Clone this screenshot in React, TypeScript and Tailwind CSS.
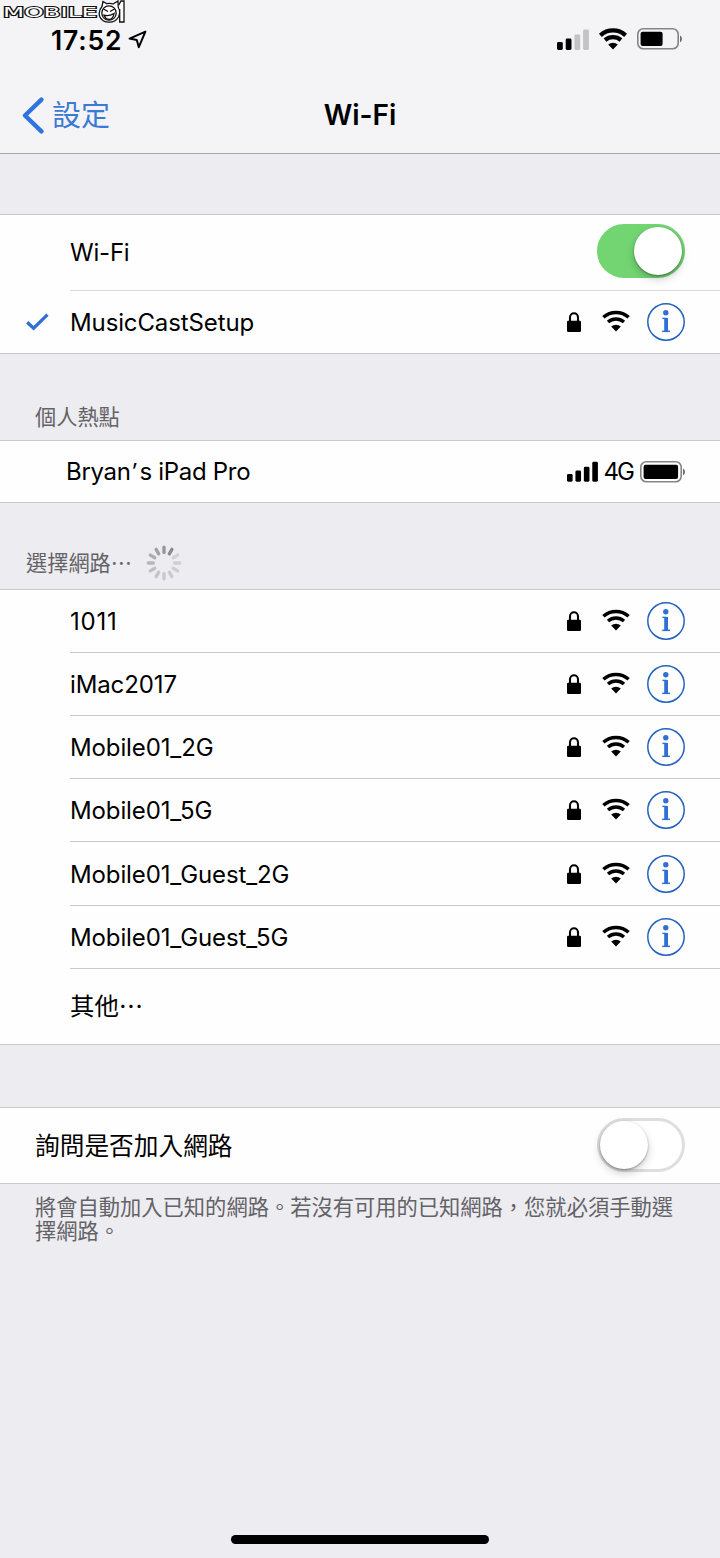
import { useState } from "react";
import type { ReactNode } from "react";
import clsx from "clsx";

const NETWORKS = ["1011", "iMac2017", "Mobile01_2G", "Mobile01_5G", "Mobile01_Guest_2G", "Mobile01_Guest_5G"];

const SPOKES = ["#97979b", "#8b8b8f", "#d2d2d6", "#cfcfd3", "#cdcdd1", "#cbcbcf", "#c8c8cc", "#c5c5c9", "#c0c0c4", "#b7b7bb", "#adadb1", "#a3a3a7"];

function WifiIcon({ bold = false }: { bold?: boolean }) {
  const stroke = bold ? 4.3 : 3.5;
  return (
    <svg width="30" height="22" viewBox="0 0 30 22" fill="none" stroke="#000" strokeWidth={stroke}>
      <path d="M2.4 7.3A18.8 18.8 0 0 1 27.6 7.3" />
      <path d="M7 12A12.4 12.4 0 0 1 23 12" />
      <path d="M10.2 16.4A7.4 7.4 0 0 1 19.8 16.4L15 21.6Z" fill="#000" stroke="none" />
    </svg>
  );
}

function LockIcon() {
  return (
    <svg width="14" height="20" viewBox="0 0 14 20">
      <path d="M3 10V5.3a4 4 0 0 1 8 0V10" fill="none" stroke="#000" strokeWidth="2.1" />
      <rect x="0" y="8.8" width="14" height="11.2" rx="1.2" />
    </svg>
  );
}

function InfoIcon() {
  return (
    <svg width="38" height="38" viewBox="0 0 38 38" fill="#2f6fd6">
      <circle cx="19" cy="19" r="18.2" fill="none" stroke="#2463be" strokeWidth="1.5" />
      <circle cx="18.8" cy="9.8" r="2.7" />
      <rect x="17.2" y="15" width="3.8" height="13.6" />
      <rect x="15.4" y="14.7" width="4" height="1.4" />
      <rect x="15.2" y="27.6" width="7.8" height="1.5" />
    </svg>
  );
}

function SignalBars({ level, className }: { level: number; className?: string }) {
  return (
    <svg width="32" height="21" viewBox="0 0 32 21" className={className}>
      {[8, 11.5, 15.5, 20.5].map((h, i) => (
        <rect key={h} x={i * 8.7} y={21 - h} width="5.8" height={h} rx="1.4" fill={i < level ? "#000" : "#c3c3c5"} />
      ))}
    </svg>
  );
}

function Battery({ fill }: { fill: number }) {
  return (
    <svg width="46" height="22" viewBox="0 0 46 22">
      <rect x="0.8" y="0.8" width="40.4" height="20" rx="5.5" fill="none" stroke="#858588" strokeWidth="1.6" />
      <rect x="3.6" y="3.7" width={fill} height="14.2" rx="2" />
      <path d="M43 7.4c2.6 1.2 2.6 5.6 0 6.8Z" fill="#6d6d70" />
    </svg>
  );
}

function Spinner() {
  return (
    <svg width="36" height="36" viewBox="-18 -18 36 36" strokeWidth="3.3" strokeLinecap="round">
      {SPOKES.map((color, i) => (
        <line key={i} x1="0" y1="-10.6" x2="0" y2="-15.8" stroke={color} transform={`rotate(${i * 30})`} />
      ))}
    </svg>
  );
}

function Watermark() {
  return (
    <svg width="128" height="26" viewBox="0 0 128 26" className="absolute left-0 top-0" fill="#fff" stroke="#111" strokeWidth="1.3">
      <text
        x="3"
        y="17.4"
        textLength="94"
        lengthAdjust="spacingAndGlyphs"
        fontSize="13.5"
        strokeWidth="1.8"
        paintOrder="stroke"
        className="font-['DejaVu_Sans']"
      >
        MOBILE
      </text>
      <path d="M102 6.5L103 1.5L107 3.7Q110 3 113 4L118 1L118.2 7Q121 12 118.5 17Q115 22.5 109 22.2Q102 22 99.7 16.5Q98 11 102 6.5Z" />
      <circle cx="109" cy="13" r="7.2" />
      <path d="M103.5 9L108 11.5M114.5 9L110 11.5M104 15.2Q109 16.5 114 13.5Q113 19.6 109 19.5Q106 19.4 104 15.2Z" fill="none" strokeWidth="1.4" />
      <path d="M118.5 5.5L121 1H124V22H119.7V9" />
    </svg>
  );
}

function Toggle({ on, onChange }: { on: boolean; onChange: () => void }) {
  return (
    <button
      role="switch"
      aria-checked={on}
      onClick={onChange}
      className={clsx(
        "flex h-[54px] w-[88px] items-center rounded-full border-[3px]",
        on ? "mb-1 justify-end border-[#72d572] bg-[#72d572]" : "mb-[2px] justify-start border-[#dedede] bg-white"
      )}
    >
      <span className="size-12 rounded-full bg-white shadow-[0_4px_8px_rgba(0,0,0,0.2),0_1px_2px_rgba(0,0,0,0.35)]" />
    </button>
  );
}

function NetworkRow({ name, checked, className }: { name: string; checked?: boolean; className?: string }) {
  return (
    <div className="flex bg-[#fefefe]">
      <div className="flex w-[70px] shrink-0 items-center pl-[26px]">
        {checked && (
          <svg width="23" height="18" viewBox="0 0 23 18" fill="none" stroke="#2f6fd6" strokeWidth="3.3">
            <path d="M1.2 9.2L7.6 15.2L21.5 1.6" />
          </svg>
        )}
      </div>
      <div className={clsx("flex grow items-center border-[#c9c9cc] pr-[35px]", className)}>
        <span className={clsx("grow pt-[2px] text-[24px]", name === "1011" ? "tracking-[0.8px]" : "tracking-[-0.12px]")}>{name}</span>
        <LockIcon />
        <span className="ml-5 mr-4 -mt-[2px]">
          <WifiIcon />
        </span>
        <InfoIcon />
      </div>
    </div>
  );
}

function Group({ children }: { children: ReactNode }) {
  return <section className="border-y border-[#c9c9cc] bg-[#fefefe]">{children}</section>;
}

export default function App() {
  const [wifi, setWifi] = useState(true);
  const [ask, setAsk] = useState(false);

  return (
    <div lang="zh-TW" className="relative flex h-[1558px] w-[720px] flex-col bg-[#edecf1] font-['Inter','Noto_Sans_CJK_TC',sans-serif] text-black">
      <Watermark />

      <header className="h-[154px] border-b border-[#a9a9ac] bg-[#f4f4f6]">
        <div className="flex h-[78px] items-center pl-[51px] pr-[38px]">
          <span className="pt-[3px] text-[26.5px] font-semibold tracking-[0.8px]">17:52</span>
          <svg width="19" height="19" viewBox="0 0 19 19" className="ml-[6px]" fill="none" stroke="#000" strokeWidth="2" strokeLinejoin="round">
            <path d="M17.4 1.6L1.6 8.6L8.8 10L10.8 17.2Z" />
          </svg>
          <SignalBars level={2} className="ml-auto mr-[9px]" />
          <WifiIcon bold />
          <span className="ml-[9px] -mr-[1px]">
            <Battery fill={22} />
          </span>
        </div>
        <div className="grid h-[74px] grid-cols-3 items-center">
          <a className="flex items-center gap-[8px] pl-[22px] text-[#3b7ad4]">
            <svg width="22" height="37" viewBox="0 0 22 37" fill="none" stroke="#2f73e0" strokeWidth="4.4" strokeLinecap="round" strokeLinejoin="round">
              <path d="M19.4 2.6L3 18.5L19.4 34.4" />
            </svg>
            <span className="pb-[3px] font-['Noto_Sans_CJK_TC',sans-serif] text-[29px] leading-none">設定</span>
          </a>
          <h1 className="text-center text-[28px] font-semibold">Wi-Fi</h1>
        </div>
      </header>

      <div className="mt-[60px]">
        <Group>
          <div className="ml-[70px] flex h-[76px] items-center justify-between border-b border-[#dadadc] pr-[35px]">
            <span className="text-[24px] tracking-[-0.2px]">Wi-Fi</span>
            <Toggle on={wifi} onChange={() => setWifi(!wifi)} />
          </div>
          <NetworkRow name="MusicCastSetup" checked className="h-[62px]" />
        </Group>
      </div>

      <h2 className="flex h-[86px] items-end pb-3 pl-[35px] font-['Noto_Sans_CJK_TC',sans-serif] text-[21.2px] leading-[24px] text-[#636367]">個人熱點</h2>
      <Group>
        <div className="flex h-[61px] items-center pl-[66px] pr-[34px]">
          <span className="grow text-[24px] tracking-[-0.3px]">
            Bryan<span className="ml-[2px] mr-[3px] font-['Open_Sans']">’</span>s iPad Pro
          </span>
          <SignalBars level={4} className="mr-[6px] w-[31px]" />
          <span className="mr-[7px] text-[24px] tracking-[-2px]">4G</span>
          <Battery fill={34.5} />
        </div>
      </Group>

      <h2 className="flex h-[86px] items-end gap-[14px] pl-[26px] font-['Noto_Sans_CJK_TC',sans-serif] text-[21.2px] leading-[24px] text-[#636367]">
        <span className="pb-[15px]">選擇網路…</span>
        <span className="pb-2">
          <Spinner />
        </span>
      </h2>
      <Group>
        {NETWORKS.map((name, i) => (
          <NetworkRow key={name} name={name} className={clsx("border-b", i === 4 ? "h-16" : "h-[63px]")} />
        ))}
        <div className="flex h-[75px] items-center pb-[2px] pl-[70px] font-['Noto_Sans_CJK_TC',sans-serif] text-[24.4px]">其他…</div>
      </Group>

      <div className="mt-[62px]">
        <Group>
          <div className="flex h-[75px] items-center justify-between pl-[35px] pr-[35px]">
            <span className="pb-[2px] font-['Noto_Sans_CJK_TC',sans-serif] text-[24.7px]">詢問是否加入網路</span>
            <Toggle on={ask} onChange={() => setAsk(!ask)} />
          </div>
        </Group>
      </div>
      <p className="pl-[35px] pr-[40px] pt-[10px] font-['Noto_Sans_CJK_TC',sans-serif] text-[21.27px] leading-[24px] text-[#636367]">
        將會自動加入已知的網路。若沒有可用的已知網路，您就必須手動選
        <br />
        擇網路。
      </p>

      <div className="mx-auto mb-[14px] mt-auto h-[9px] w-[258px] rounded-full bg-black" />
    </div>
  );
}
